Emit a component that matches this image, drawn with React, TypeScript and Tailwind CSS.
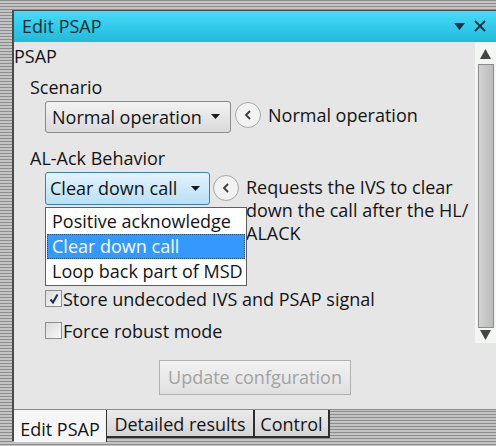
import React from 'react';

const stripes =
  'bg-[repeating-linear-gradient(to_bottom,#8c8c8c_0px,#8c8c8c_1px,#c4c4c4_1px,#c4c4c4_3px)]';

const HintButton: React.FC = () => (
  <div className="flex h-[26px] w-[26px] shrink-0 items-center justify-center rounded-full border border-[#a8a8a8] bg-[#f2f2f2]">
    <svg width="8" height="10" viewBox="0 0 8 10">
      <path d="M6 1L2 5l4 4" stroke="#3a3a3a" strokeWidth="1.8" fill="none" />
    </svg>
  </div>
);

const Arrow: React.FC = () => (
  <svg width="9" height="5" viewBox="0 0 9 5" className="shrink-0">
    <path d="M0 0h9L4.5 5z" fill="#1a1a1a" />
  </svg>
);

const Checkbox: React.FC<{ checked?: boolean; label: string }> = ({ checked, label }) => (
  <div className="flex items-center">
    <div className="flex h-[17px] w-[17px] items-center justify-center border border-[#8e8e8e] bg-gradient-to-br from-[#dcdcdc] to-[#f8f8f8]">
      {checked && (
        <svg width="12" height="12" viewBox="0 0 12 12">
          <path d="M2.5 6.5l2.5 3L9.5 1.5" stroke="#23236b" strokeWidth="2" fill="none" />
        </svg>
      )}
    </div>
    <span className="ml-[1px]">{label}</span>
  </div>
);

export default function App() {
  return (
    <div
      className={`relative h-[446px] w-[496px] overflow-hidden pl-[12px] pt-[10px] text-[18px] leading-[20px] text-[#141414] ${stripes}`}
      style={{ fontFamily: '"Open Sans", "Noto Sans", sans-serif' }}
    >
      <div className="flex h-[431px] flex-col border-l-2 border-t border-[#4a4a4a]">
        {/* title bar */}
        <div className="flex h-[31px] items-center justify-between bg-gradient-to-b from-[#45dcf9] to-[#1fbadb] pl-[8px] pr-[10px] text-[#0f2a33]">
          <span>Edit PSAP</span>
          <div className="flex items-center gap-[9px]">
            <svg width="11" height="7" viewBox="0 0 11 7">
              <path d="M0 0h11L5.5 7z" fill="#183040" />
            </svg>
            <svg width="12" height="12" viewBox="0 0 12 12">
              <path d="M1 1l10 10M11 1L1 11" stroke="#183040" strokeWidth="1.8" />
            </svg>
          </div>
        </div>

        {/* panel body */}
        <div className="flex h-[368px] bg-[#e6e6e6]">
          <div className="relative flex flex-1 flex-col pt-[4px]">
            <div className="h-[20px]">PSAP</div>

            <div className="ml-[16px] mt-[11px] h-[20px]">Scenario</div>
            <div className="ml-[31px] mt-[4px] flex items-center">
              <div className="flex h-[32px] w-[186px] items-center justify-between rounded-[3px] border border-[#8a8a8a] bg-gradient-to-b from-[#f3f3f3] to-[#dadada] pl-[6px] pr-[10px]">
                <span>Normal operation</span>
                <Arrow />
              </div>
              <div className="ml-[4px] -mt-[4px]">
                <HintButton />
              </div>
              <span className="ml-[7px] -mt-[4px]">Normal operation</span>
            </div>

            <div className="ml-[16px] mt-[15px] h-[20px]">AL-Ack Behavior</div>
            <div className="ml-[31px] mt-[4px] flex items-start">
              <div className="flex h-[33px] w-[165px] items-center justify-between rounded-[3px] border border-[#3c7fb1] bg-gradient-to-b from-[#e3f3fc] to-[#b9e0f5] pl-[4px] pr-[9px]">
                <span>Clear down call</span>
                <Arrow />
              </div>
              <div className="ml-[3px] mt-[3px]">
                <HintButton />
              </div>
              <div className="ml-[7px] mt-[4px] leading-[23px]">
                Requests the IVS to clear
                <br />
                down the call after the HL/
                <br />
                ALACK
              </div>
            </div>

            <div className="ml-[31px] mt-[44px] flex flex-col gap-[12px]">
              <Checkbox checked label="Store undecoded IVS and PSAP signal" />
              <Checkbox label="Force robust mode" />
            </div>

            <div className="ml-[145px] mt-[19px] flex h-[35px] w-[192px] items-center justify-center border border-[#b0b0b0] bg-gradient-to-b from-[#f2f2f2] to-[#e0e0e0] text-[#a3a3a3]">
              Update confguration
            </div>

            {/* open options list of the AL-Ack selector */}
            <div className="absolute left-[31px] top-[165px] w-[202px] border border-[#5e5e5e] bg-white p-[1px] leading-[25px]">
              <div className="pl-[5px]">Positive acknowledge</div>
              <div className="border border-dotted border-[#1d4f8a] bg-[#3399ff] pl-[4px] leading-[23px] text-white">
                Clear down call
              </div>
              <div className="pl-[5px]">Loop back part of MSD</div>
            </div>
          </div>

          {/* vertical scrollbar */}
          <div className="flex h-[301px] w-[21px] flex-col items-center bg-[#f3f6f3]">
            <svg width="11" height="10" viewBox="0 0 11 10" className="mt-[7px]">
              <path d="M5.5 0L11 10H0z" fill="#444" />
            </svg>
            <div className="mt-[5px] h-[264px] w-[16px] border border-[#8c8c8c] bg-gradient-to-r from-[#d2d2d2] to-[#bcbcbc]" />
            <svg width="11" height="10" viewBox="0 0 11 10" className="mt-[2px]">
              <path d="M0 0h11L5.5 10z" fill="#444" />
            </svg>
          </div>
        </div>

        {/* tab strip */}
        <div className="flex h-[32px] items-start border-t border-[#8c8c8c]">
          <div className="flex h-[32px] w-[93px] items-center justify-center border-r border-[#333] bg-[#f6f6f6] pt-[5px]">
            Edit PSAP
          </div>
          <div className="flex h-[28px] w-[148px] items-center justify-center border-b-2 border-r-2 border-[#2e2e2e] bg-gradient-to-b from-[#ececec] to-[#d4d4d4] pt-[2px]">
            Detailed results
          </div>
          <div className="flex h-[28px] w-[75px] items-center justify-center border-b-2 border-r-2 border-[#2e2e2e] bg-gradient-to-b from-[#ececec] to-[#d4d4d4] pt-[2px]">
            Control
          </div>
        </div>
      </div>
    </div>
  );
}
